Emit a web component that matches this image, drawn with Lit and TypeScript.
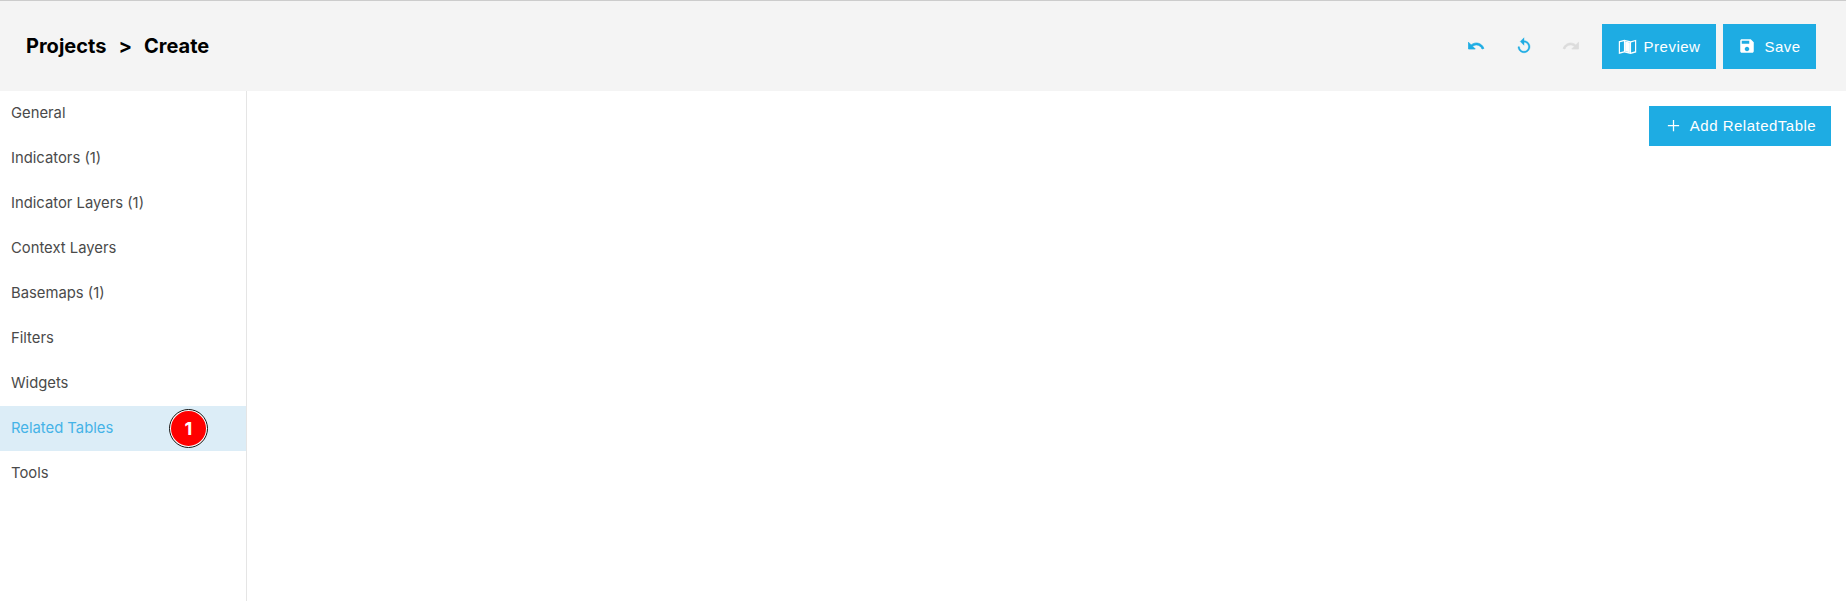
import { LitElement, html, css, svg } from "lit";
import { customElement } from "lit/decorators.js";

const items = ["General", "Indicators (1)", "Indicator Layers (1)", "Context Layers", "Basemaps (1)", "Filters", "Widgets", "Related Tables", "Tools"];

const icon = (d: unknown, cls: string) => html`<svg class=${cls} viewBox="0 0 24 24" fill="currentColor">${d}</svg>`;
const undo = svg`<path stroke="currentColor" stroke-width="1" d="M12.5 8c-2.65 0-5.05.99-6.9 2.6L2 7v9h9l-3.62-3.62c1.39-1.16 3.16-1.88 5.12-1.88 3.54 0 6.55 2.31 7.6 5.5l2.37-.78C21.08 11.03 17.15 8 12.5 8z"/>`;
const replay = svg`<path stroke="currentColor" stroke-width=".5" d="M12 5V1L7 6l5 5V7c3.31 0 6 2.69 6 6s-2.69 6-6 6-6-2.69-6-6H4c0 4.42 3.58 8 8 8s8-3.58 8-8-3.58-8-8-8z"/>`;
const redo = svg`<path stroke="currentColor" stroke-width="1" d="M18.4 10.6C16.55 8.99 14.15 8 11.5 8c-4.65 0-8.58 3.03-9.96 7.22L3.9 16c1.05-3.19 4.05-5.5 7.6-5.5 1.95 0 3.73.72 5.12 1.88L13 16h9V7l-3.6 3.6z"/>`;
const save = svg`<path d="M17 3H5c-1.11 0-2 .9-2 2v14c0 1.1.89 2 2 2h14c1.1 0 2-.9 2-2V7l-4-4zm-5 16c-1.66 0-3-1.34-3-3s1.34-3 3-3 3 1.34 3 3-1.34 3-3 3zm3-10H5V5h10v4z"/>`;
const map = svg`<path d="M1 5.5 8 3.5 16 5.5 23 3.5V19.5L16 21.5 8 19.5 1 21.5ZM2.5 6.7V19.4L7.5 18V5.3ZM9 5.4V17.9L15 19.4V6.9ZM16.5 6.9V19.5L21.5 18.1V5.5Z" fill-rule="evenodd"/><path d="M9 5.6 15 7.1V19.4L9 17.9Z"/>`;
const plus = svg`<path d="M11 3h2v8h8v2h-8v8h-2v-8H3v-2h8z"/>`;

@customElement("app-root")
export class AppRoot extends LitElement {
  static styles = css`
    :host {
      display: flex;
      flex-direction: column;
      height: 601px;
      background: #fff;
      font-family: Inter, "Liberation Sans", sans-serif;
      overflow: hidden;
    }
    .header {
      flex: 0 0 91px;
      box-sizing: border-box;
      display: flex;
      align-items: center;
      justify-content: space-between;
      background: #f4f4f4;
      border-top: 1px solid #cccccc;
      padding: 0 30px 0 26px;
    }
    .crumbs {
      display: flex;
      gap: 12px;
      font-size: 20px;
      font-weight: 700;
      color: #000;
    }
    .actions {
      display: flex;
      align-items: center;
    }
    .tool {
      width: 47.5px;
      display: flex;
      justify-content: center;
      color: #1eace3;
    }
    .tool.off {
      color: #dcdcdc;
    }
    .ic {
      width: 18px;
      height: 18px;
      display: block;
    }
    .btn {
      display: flex;
      align-items: center;
      justify-content: center;
      background: #1eace3;
      color: #fff;
      font-family: "Liberation Sans", Arial, sans-serif;
      font-size: 15px;
      letter-spacing: 0.5px;
    }
    .preview {
      width: 114px;
      height: 45px;
      gap: 7px;
      margin-left: 7px;
    }
    .preview .ic {
      width: 19px;
      height: 19px;
    }
    .save {
      width: 93px;
      height: 45px;
      gap: 8px;
      margin-left: 7px;
    }
    .body {
      flex: 1;
      display: flex;
    }
    .side {
      width: 246px;
      border-right: 1px solid #e5e5e5;
      display: flex;
      flex-direction: column;
    }
    .item {
      height: 45px;
      box-sizing: border-box;
      flex: none;
      display: flex;
      align-items: center;
      padding: 0 0 2px 11px;
      font-size: 14.8px;
      color: #4a4a4a;
      position: relative;
    }
    .item.active {
      background: #dcedf7;
      color: #45b3e7;
    }
    .marker {
      position: absolute;
      left: 169px;
      top: 3px;
      width: 39px;
      height: 39px;
      box-sizing: border-box;
      border-radius: 50%;
      background: #ff0000;
      border: 2px solid #fff;
      outline: 1.5px solid #111;
      outline-offset: -1.5px;
      color: #fff;
      font: 700 18px Inter, "Liberation Sans", Arial, sans-serif;
      display: flex;
      align-items: center;
      justify-content: center;
    }
    .main {
      flex: 1;
      display: flex;
      justify-content: flex-end;
      align-items: flex-start;
      padding: 15px 15px 0 0;
    }
    .add {
      width: 182px;
      height: 40px;
      box-sizing: border-box;
      gap: 9px;
      padding: 0 0 1px 2px;
    }
    .add .ic {
      width: 15px;
      height: 15px;
    }
  `;

  render() {
    return html`
      <div class="header">
        <div class="crumbs"><span>Projects</span><span>&gt;</span><span>Create</span></div>
        <div class="actions">
          <div class="tool">${icon(undo, "ic")}</div>
          <div class="tool">${icon(replay, "ic")}</div>
          <div class="tool off">${icon(redo, "ic")}</div>
          <div class="btn preview">${icon(map, "ic")}<span>Preview</span></div>
          <div class="btn save">${icon(save, "ic")}<span>Save</span></div>
        </div>
      </div>
      <div class="body">
        <nav class="side">
          ${items.map((t) => html`<div class="item ${t === "Related Tables" ? "active" : ""}">${t}${t === "Related Tables" ? html`<span class="marker">1</span>` : ""}</div>`)}
        </nav>
        <div class="main">
          <div class="btn add">${icon(plus, "ic")}<span>Add RelatedTable</span></div>
        </div>
      </div>
    `;
  }
}
